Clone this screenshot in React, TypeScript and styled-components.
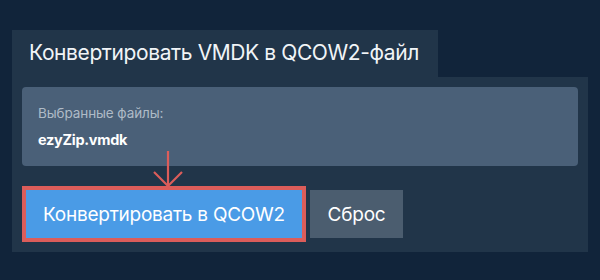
import React from "react";
import styled, { createGlobalStyle } from "styled-components";

const Global = createGlobalStyle`
  html, body {
    margin: 0;
    padding: 0;
    background: #11243a;
  }
  body {
    font-family: Inter, "Noto Sans", sans-serif;
    -webkit-font-smoothing: antialiased;
  }
`;

const Page = styled.div`
  width: 600px;
  height: 280px;
  box-sizing: border-box;
  padding: 30px 12px 0 12px;
  background: #11243a;
`;

const Tab = styled.div`
  display: inline-flex;
  align-items: center;
  box-sizing: border-box;
  width: 426px;
  height: 47px;
  padding-left: 17px;
  padding-bottom: 2px;
  background: #213549;
  color: #f1f4f7;
  font-size: 21px;
  font-weight: 400;
  letter-spacing: -0.4px;
  white-space: nowrap;
`;

const Panel = styled.div`
  width: 576px;
  box-sizing: border-box;
  padding: 10px;
  background: #213549;
`;

const FilesBox = styled.div`
  box-sizing: border-box;
  height: 79px;
  border-radius: 4px;
  background: #4a6078;
  padding: 18px 16px 0 16px;
  display: flex;
  flex-direction: column;
  gap: 10px;
`;

const FilesLabel = styled.div`
  color: #afbbc7;
  font-size: 13.5px;
  letter-spacing: -0.1px;
  line-height: 16px;
`;

const FileName = styled.div`
  color: #ffffff;
  font-size: 14.5px;
  font-weight: 700;
  letter-spacing: -0.3px;
  line-height: 18px;
`;

const Actions = styled.div`
  display: flex;
  align-items: center;
  gap: 4px;
  margin-top: 20px;
`;

const Highlight = styled.div`
  position: relative;
  border: 4px solid #dc5d5a;
  display: flex;
`;

const Button = styled.button<{ $variant: "primary" | "secondary" }>`
  box-sizing: border-box;
  height: 48px;
  border: none;
  margin: 0;
  width: ${(p) => (p.$variant === "primary" ? "276px" : "93px")};
  padding: 0;
  background: ${(p) => (p.$variant === "primary" ? "#4a9be6" : "#4b5d6f")};
  color: #ffffff;
  font-family: Inter, "Noto Sans", sans-serif;
  font-size: 19px;
  font-weight: 400;
  letter-spacing: -0.25px;
  white-space: nowrap;
  cursor: pointer;
`;

const Arrow = styled.svg`
  position: absolute;
  left: 126px;
  top: -40px;
  overflow: visible;
`;

export default function App() {
  return (
    <>
      <Global />
      <Page>
        <Tab>Конвертировать VMDK в QCOW2-файл</Tab>
        <Panel>
          <FilesBox>
            <FilesLabel>Выбранные файлы:</FilesLabel>
            <FileName>ezyZip.vmdk</FileName>
          </FilesBox>
          <Actions>
            <Highlight>
              <Arrow width="32" height="38" viewBox="0 0 32 38">
                <line x1="16" y1="1" x2="16" y2="36" stroke="#dc5d5a" strokeWidth="2.2" />
                <polyline
                  points="2,22 16,36 30,22"
                  fill="none"
                  stroke="#dc5d5a"
                  strokeWidth="2.2"
                />
              </Arrow>
              <Button $variant="primary">Конвертировать в QCOW2</Button>
            </Highlight>
            <Button $variant="secondary">Сброс</Button>
          </Actions>
        </Panel>
      </Page>
    </>
  );
}
